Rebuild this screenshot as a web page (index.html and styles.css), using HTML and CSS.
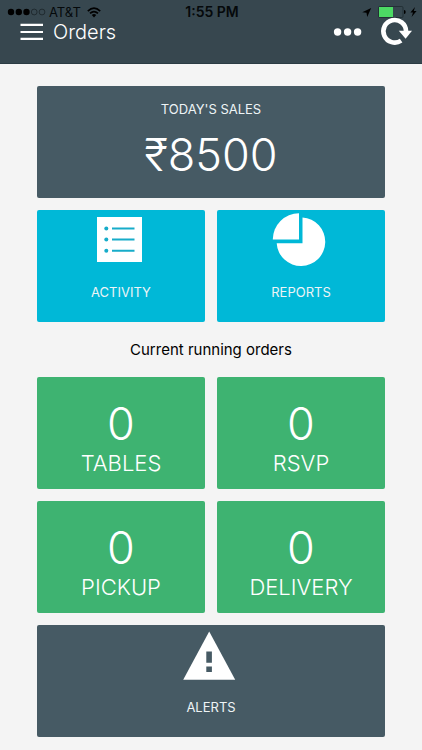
FILE: index.html
```html
<!DOCTYPE html>
<html lang="en">
<head>
<meta charset="utf-8">
<meta name="viewport" content="width=device-width, initial-scale=1">
<title>Orders</title>
<link rel="stylesheet" href="styles.css">
</head>
<body>
<header class="header">
  <div class="status">
    <div class="status-side">
      <svg class="signal" viewBox="0 0 38 8" width="38" height="8" aria-hidden="true">
        <g fill="#000"><circle cx="4" cy="4" r="3.2"/><circle cx="11.8" cy="4" r="3.2"/><circle cx="19.5" cy="4" r="3.2"/></g>
        <g fill="none" stroke="#10171b" stroke-width=".6"><circle cx="27.2" cy="4" r="2.9"/><circle cx="35" cy="4" r="2.9"/></g>
      </svg>
      <span>AT&amp;T</span>
      <svg class="wifi" viewBox="0 0 14 11" width="14" height="11" aria-hidden="true">
        <g fill="none" stroke="#000" stroke-width="1.7"><path d="M.8 4.1Q7-1.7 13.2 4.1"/><path d="M3 6.4Q7 2.7 11 6.4"/></g>
        <path d="M4.8 8Q7 6.2 9.2 8L7 10.4z"/>
      </svg>
    </div>
    <time class="clock">1:55 PM</time>
    <div class="status-side status-end">
      <svg viewBox="0 0 9 9" width="9" height="9" aria-hidden="true"><path d="M9.2 0 5.2 9 4.5 4.8.2 4.2z"/></svg>
      <svg class="battery" viewBox="0 0 28 12" width="28" height="12" aria-hidden="true">
        <rect x=".5" y=".5" width="24.5" height="11" rx="1.2" fill="none" stroke="#1b262b" stroke-width=".7"/>
        <rect x="1" y="1" width="14" height="10" fill="#4cd964"/>
        <path d="M26 4q1.7 0 1.7 2T26 8z"/>
      </svg>
      <svg viewBox="0 0 7 10" width="7" height="10" aria-hidden="true"><path d="M5 0 .4 5.4H3L1.6 10 6.6 4.1H3.8z"/></svg>
    </div>
  </div>
  <div class="toolbar">
    <button class="icon-button" aria-label="Menu">
      <svg viewBox="0 0 24 28" width="24" height="28"><path d="M.5 6.9H23M.5 14H23M.5 20.9H23" stroke="#fff" stroke-width="2.2"/></svg>
    </button>
    <h1 class="title">Orders</h1>
    <button class="icon-button more" aria-label="More">
      <svg viewBox="0 0 28 28" width="28" height="28" fill="#fff"><circle cx="4.6" cy="14" r="3.7"/><circle cx="14.6" cy="14" r="3.7"/><circle cx="24.6" cy="14" r="3.7"/></svg>
    </button>
    <button class="icon-button" aria-label="Refresh">
      <svg viewBox="0 0 32 28" width="32" height="28"><path d="M20.1 22.6A11.3 11.3 0 1 1 25 13" fill="none" stroke="#fff" stroke-width="4.6"/><path d="M17.8 12.8H31L24.6 20.7z" fill="#fff"/></svg>
    </button>
  </div>
</header>
<main class="content">
  <div class="grid">
    <section class="card card-slate wide sales">
      <h2 class="label">TODAY'S SALES</h2>
      <p class="number">₹8500</p>
    </section>
    <a class="card card-cyan tile" href="#activity">
      <svg viewBox="0 0 54 56" width="54" height="56" aria-hidden="true">
        <path d="M3 7h45v45H3z" fill="#fff"/>
        <g fill="#17acc9"><circle cx="12.3" cy="18.5" r="2"/><circle cx="12.3" cy="29.5" r="2"/><circle cx="12.3" cy="40.7" r="2"/></g>
        <path d="M18 18.5H40.5M18 29.5H40.5M18 40.7H40.5" stroke="#17acc9" stroke-width="2"/>
      </svg>
      <span class="label">ACTIVITY</span>
    </a>
    <a class="card card-cyan tile" href="#reports">
      <svg viewBox="0 0 54 56" width="54" height="56" fill="#fff" aria-hidden="true">
        <path d="M25 3.2V29.6H-1.2A26.3 26.3 0 0 1 25 3.2z"/>
        <path d="M28.5 7.5A24.3 24.3 0 1 1 2.7 33.2H28.5z"/>
      </svg>
      <span class="label">REPORTS</span>
    </a>
  </div>
  <h2 class="section-title">Current running orders</h2>
  <div class="grid">
    <a class="card card-green count" href="#tables"><span class="number">0</span><span class="caption">TABLES</span></a>
    <a class="card card-green count" href="#rsvp"><span class="number">0</span><span class="caption">RSVP</span></a>
    <a class="card card-green count" href="#pickup"><span class="number">0</span><span class="caption">PICKUP</span></a>
    <a class="card card-green count" href="#delivery"><span class="number">0</span><span class="caption">DELIVERY</span></a>
    <a class="card card-slate wide tile" href="#alerts">
      <svg viewBox="0 0 54 56" width="54" height="56" aria-hidden="true">
        <path d="M25.2 6.5 51.2 54.7H-.8z" fill="#fff"/>
        <path d="M22.3 26.5h5.6v11.3h-5.6zM22.3 41.5h5.6v5.5h-5.6z" fill="#465a64"/>
      </svg>
      <span class="label">ALERTS</span>
    </a>
  </div>
</main>
</body>
</html>
```
FILE: styles.css
```css
* {
  box-sizing: border-box;
}

body {
  margin: 0;
  background: #f4f4f4;
  color: #111;
  font-family: Inter, "Liberation Sans", sans-serif;
}

h1, h2, p {
  margin: 0;
  font-weight: 400;
}

svg {
  display: block;
  flex: none;
  overflow: visible;
}

.header {
  height: 64px;
  padding-top: 6px;
  background: #37474f;
  border-bottom: 1px solid #2b3b43;
}

.status {
  display: grid;
  grid-template-columns: 1fr auto 1fr;
  align-items: center;
  height: 12px;
  padding: 0 5px 0 7px;
  color: #05090b;
  font-size: 13px;
  line-height: 12px;
}

.status-side {
  display: flex;
  align-items: center;
  gap: 4px;
}

.status-end {
  justify-content: flex-end;
}

.wifi {
  margin-left: 2px;
}

.battery {
  margin-left: 3px;
}

.clock {
  font-size: 14px;
  font-weight: 600;
}

.toolbar {
  display: flex;
  align-items: center;
  height: 28px;
  padding: 0 9px 0 20px;
}

.icon-button {
  padding: 0;
  border: 0;
  background: none;
}

.title {
  flex: 1;
  margin-left: 9px;
  color: #fff;
  font-size: 20px;
  font-weight: 350;
  line-height: 28px;
}

.more {
  margin-right: 20px;
}

.content {
  padding: 22px 37px 13px;
}

.grid {
  display: grid;
  grid-template-columns: 1fr 1fr;
  gap: 12px;
}

.card {
  display: flex;
  flex-direction: column;
  align-items: center;
  height: 112px;
  border-radius: 2px;
  color: #fff;
  text-decoration: none;
}

.card-slate {
  background: #465a64;
}

.card-cyan {
  background: #00b8d7;
}

.card-green {
  background: #3eb371;
}

.wide {
  grid-column: 1 / -1;
}

.sales {
  padding-top: 15px;
}

.label {
  color: #eef4f6;
  font-size: 13px;
  font-weight: 400;
  line-height: 16px;
}

.number {
  font-size: 45px;
  font-weight: 350;
  line-height: 48px;
}

.sales .number {
  margin-top: 14px;
}

.tile {
  gap: 18px;
}

.section-title {
  padding: 18px 0 17px;
  color: #000;
  font-size: 15px;
  line-height: 20px;
  text-align: center;
}

.count {
  padding-top: 23px;
}

.caption {
  font-size: 22px;
  font-weight: 350;
  line-height: 30px;
}
```
